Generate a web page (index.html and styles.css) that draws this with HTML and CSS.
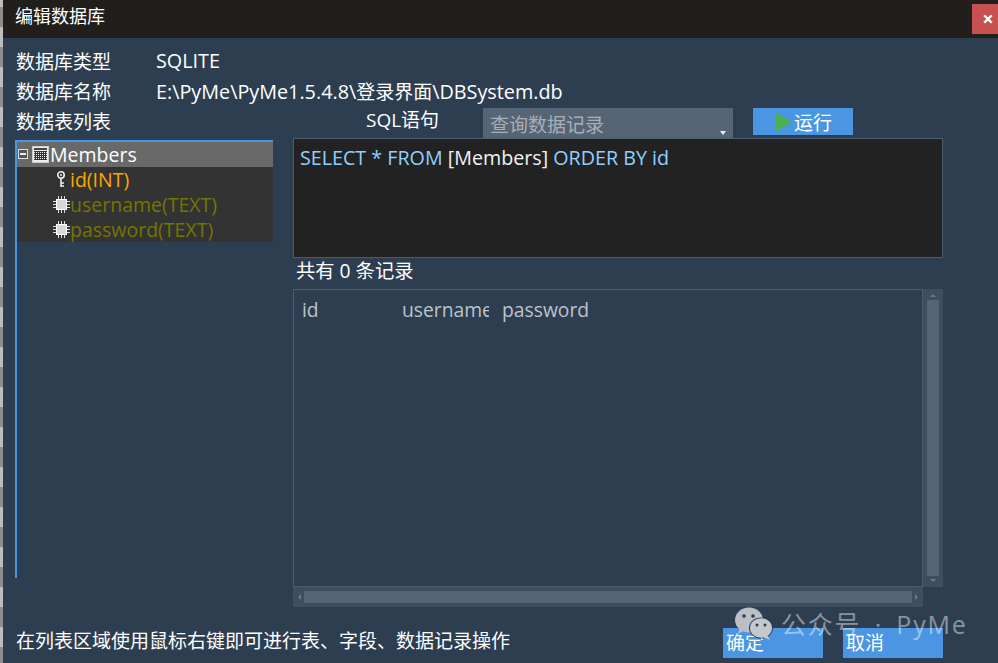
FILE: index.html
```html
<!DOCTYPE html>
<html lang="zh-CN">
<head>
    <meta charset="UTF-8">
    <title>编辑数据库</title>
    <link rel="stylesheet" href="styles.css">
</head>
<body>
    <div class="window">
        <div class="titlebar">
            <span class="title">编辑数据库</span>
            <div class="close">×</div>
        </div>
        <div class="content">
            <div class="info-row"><span class="info-label">数据库类型</span><span>SQLITE</span></div>
            <div class="info-row"><span class="info-label">数据库名称</span><span class="info-path">E:\PyMe\PyMe1.5.4.8\<span class="cjk">登录界面</span>\DBSystem.db</span></div>
            <div class="workspace">
                <div class="left-col">
                    <div class="list-label">数据表列表</div>
                    <div class="tree">
                        <div class="tree-head">
                            <svg class="expander" width="11" height="11" viewBox="0 0 11 11" shape-rendering="crispEdges">
                                <rect x="0.5" y="0.5" width="9" height="9" fill="#555" stroke="#ddd"/>
                                <rect x="2" y="4" width="6" height="2" fill="#eee"/>
                            </svg>
                            <svg class="table-icon" width="17" height="17" viewBox="0 0 17 17" shape-rendering="crispEdges">
                                <rect x="0.5" y="0.5" width="16" height="16" fill="#eee" stroke="#ccc"/>
                                <rect x="2" y="2" width="13" height="2" fill="#444"/>
                                <path d="M2 5.5h13M2 7.5h13M2 9.5h13M2 11.5h13M2 13.5h13M3.5 5v9M5.5 5v9M7.5 5v9M9.5 5v9M11.5 5v9M13.5 5v9" stroke="#333" fill="none"/>
                            </svg>
                            <span>Members</span>
                        </div>
                        <div class="tree-row key-row">
                            <svg class="key-icon" width="11" height="18" viewBox="0 0 11 18">
                                <circle cx="5" cy="4" r="3.2" fill="#333" stroke="#eee" stroke-width="1.6"/>
                                <circle cx="5" cy="4" r="1" fill="#eee"/>
                                <path d="M5 7v9M5 12h3M5 15h3" stroke="#eee" stroke-width="1.6" fill="none"/>
                            </svg>
                            <span>id(INT)</span>
                        </div>
                        <div class="tree-row field-row">
                            <svg class="chip-icon" width="17" height="17" viewBox="0 0 17 17" shape-rendering="crispEdges">
                                <path d="M5.500 0v17M8.500 0v17M11.500 0v17M0 5.500h17M0 8.500h17M0 11.500h17" stroke="#ddd" fill="none"/>
                                <rect x="3.500" y="3.500" width="10" height="10" fill="#d8d8d8" stroke="#fff"/>
                            </svg>
                            <span>username(TEXT)</span>
                        </div>
                        <div class="tree-row field-row">
                            <svg class="chip-icon" width="17" height="17" viewBox="0 0 17 17" shape-rendering="crispEdges">
                                <path d="M5.500 0v17M8.500 0v17M11.500 0v17M0 5.500h17M0 8.500h17M0 11.500h17" stroke="#ddd" fill="none"/>
                                <rect x="3.500" y="3.500" width="10" height="10" fill="#d8d8d8" stroke="#fff"/>
                            </svg>
                            <span>password(TEXT)</span>
                        </div>
                    </div>
                </div>
                <div class="right-col">
                    <div class="toolbar">
                        <span class="sql-label">SQL语句</span>
                        <div class="combo">查询数据记录<span class="combo-arrow"></span></div>
                        <div class="btn run-btn"><span class="run-icon"></span><span class="run-text">运行</span></div>
                    </div>
                    <div class="editor">
                        <span class="kw">SELECT * FROM</span> <span class="tbl">[Members]</span> <span class="kw">ORDER BY id</span>
                    </div>
                    <div class="count">共有 0 条记录</div>
                    <div class="grid-wrap">
                        <div class="grid-box">
                            <span class="col col-id">id</span>
                            <span class="col col-user">username</span>
                            <span class="col">password</span>
                        </div>
                        <div class="vbar">
                            <span class="arrow-up"></span>
                            <div class="vthumb"></div>
                            <span class="arrow-down"></span>
                        </div>
                    </div>
                    <div class="hbar">
                        <span class="arrow-left"></span>
                        <div class="hthumb"></div>
                        <span class="arrow-right"></span>
                    </div>
                </div>
            </div>
            <div class="footer">
                <span class="hint">在列表区域使用鼠标右键即可进行表、字段、数据记录操作</span>
                <div class="btn ok-btn">确定</div>
                <div class="btn">取消</div>
            </div>
        </div>
    </div>

    <!-- watermark sits over the buttons -->
    <div class="watermark">
        <svg width="38" height="34" viewBox="0 0 38 34">
            <ellipse cx="14" cy="13" rx="14" ry="12.500" fill="#b9bfc4"/>
            <path d="M5 20l-2 7 7-4z" fill="#b9bfc4"/>
            <ellipse cx="26" cy="21" rx="12" ry="10.500" fill="#2c3e50"/>
            <ellipse cx="26" cy="21" rx="11" ry="9.800" fill="#c3c8cc"/>
            <path d="M32 28l3 5-7-3z" fill="#c3c8cc"/>
            <circle cx="9" cy="9" r="1.800" fill="#2c3e50"/>
            <circle cx="18" cy="9" r="1.800" fill="#2c3e50"/>
            <circle cx="22" cy="18" r="1.500" fill="#2c3e50"/>
            <circle cx="30" cy="18" r="1.500" fill="#2c3e50"/>
        </svg>
        <span>公众号 · PyMe</span>
    </div>
</body>
</html>
```

FILE: styles.css
```css
html, body {
    margin: 0;
    padding: 0;
    height: 663px;
    overflow: hidden;
    background-color: #2c3e50;
}
body {
    font-family: "Open Sans", "Noto Sans CJK SC", sans-serif;
    font-size: 19px;
    color: #fff;
    position: relative;
}
.window {
    height: 663px;
    padding-left: 3px;
    box-sizing: border-box;
    /* striped edge left of the dialog */
    background: repeating-linear-gradient(to bottom, #bdbdbd 0, #bdbdbd 7px, #8e8e8e 7px, #8e8e8e 27px, #bdbdbd 27px, #bdbdbd 40px) left top / 3px 100% no-repeat;
}
.titlebar {
    height: 38px;
    background-color: #221e1c;
    display: flex;
    justify-content: space-between;
    padding-left: 12px;
    box-sizing: border-box;
}
.title {
    font-size: 18px;
    line-height: 32px;
}
.close {
    width: 26px;
    height: 30px;
    margin-top: 4px;
    padding-left: 6px;
    box-sizing: border-box;
    background-color: #c75050;
    font-size: 20px;
    font-weight: bold;
    line-height: 30px;
    text-align: center;
}
.content {
    padding: 8px 0 0 12px;
}
.info-row {
    height: 30px;
    line-height: 30px;
    display: flex;
    padding-left: 1px;
    font-size: 19.800px;
}
.info-label {
    width: 140px;
    font-size: 19px;
    line-height: 32px;
}
.info-path {
    line-height: 32px;
}
.cjk {
    font-size: 19px;
}

/* left tree + right side */
.workspace {
    display: grid;
    grid-template-columns: 258px 650px;
    column-gap: 20px;
    height: 522px;
}
.list-label {
    height: 34px;
    line-height: 32px;
    padding-left: 1px;
}
.tree {
    height: 438px;
    border-left: 2px solid #4a96e2;
    border-top: 2px solid #4a96e2;
    box-sizing: border-box;
}
.tree-head {
    height: 25px;
    background-color: #696969;
    display: flex;
    align-items: center;
    font-size: 19.500px;
    padding-left: 1px;
}
.expander {
    margin-right: 3px;
}
.table-icon {
    margin-right: 1px;
}
.tree-row {
    height: 25px;
    background-color: #333;
    display: flex;
    align-items: center;
    font-size: 19.500px;
}
.key-row {
    color: #ffa500;
    padding-left: 39px;
}
.key-icon {
    margin-right: 3px;
}
.field-row {
    color: #757500;
    padding-left: 36px;
}

.toolbar {
    height: 32px;
    display: flex;
    padding-left: 73px;
}
.sql-label {
    width: 117px;
    line-height: 29px;
    font-size: 19px;
}
.combo {
    width: 250px;
    height: 30px;
    margin-top: 2px;
    margin-right: 20px;
    padding-left: 7px;
    box-sizing: border-box;
    background-color: #566575;
    color: #a8afb6;
    line-height: 34px;
    position: relative;
}
.combo-arrow {
    position: absolute;
    right: 7px;
    bottom: 3px;
    border-left: 3px solid transparent;
    border-right: 3px solid transparent;
    border-top: 4px solid #eee;
}
.btn {
    width: 100px;
    height: 30px;
    background-color: #4a96e2;
    line-height: 30px;
    padding-left: 3px;
    box-sizing: border-box;
}
.run-btn {
    height: 27px;
    margin-top: 2px;
    padding-left: 22px;
    display: flex;
    align-items: center;
}
.run-icon {
    width: 0;
    height: 0;
    margin-right: 2px;
    border-left: 17px solid #4cb050;
    border-top: 10px solid transparent;
    border-bottom: 10px solid transparent;
}
.run-text {
    margin-top: 3px;
}
.editor {
    height: 120px;
    background-color: #222;
    border: 1px solid #4b5c6d;
    box-sizing: border-box;
    padding: 6px 6px;
    font-size: 19.700px;
    line-height: 25px;
}
.kw {
    color: #8fd0ff;
}
.tbl {
    color: #f2f2f2;
}
.count {
    height: 31px;
    line-height: 26px;
    padding-left: 3px;
    font-size: 19.300px;
}
.grid-wrap {
    display: flex;
    height: 298px;
}
.grid-box {
    width: 630px;
    border: 1px solid #4b5c6d;
    box-sizing: border-box;
    padding-left: 8px;
    color: #bcc3ca;
    font-size: 19.300px;
    line-height: 39px;
    display: flex;
}
.col {
    width: 100px;
    overflow: hidden;
    white-space: nowrap;
}
.col-user {
    width: 87px;
    margin-right: 13px;
}
.vbar {
    width: 20px;
    background-color: #3f4e5d;
    display: flex;
    flex-direction: column;
    align-items: center;
    justify-content: space-between;
    padding: 5px 0;
    box-sizing: border-box;
}
.vthumb {
    width: 12px;
    flex: 1;
    margin: 3px 0;
    background-color: #566575;
}
.hbar {
    width: 630px;
    height: 20px;
    background-color: #3f4e5d;
    display: flex;
    align-items: center;
    padding: 0 5px;
    box-sizing: border-box;
}
.hthumb {
    flex: 1;
    height: 12px;
    margin: 0 3px;
    background-color: #566575;
}
.arrow-up, .arrow-down {
    border-left: 3px solid transparent;
    border-right: 3px solid transparent;
}
.arrow-up {
    border-bottom: 3px solid #6b7885;
}
.arrow-down {
    border-top: 3px solid #6b7885;
}
.arrow-left, .arrow-right {
    border-top: 3px solid transparent;
    border-bottom: 3px solid transparent;
}
.arrow-left {
    border-right: 3px solid #6b7885;
}
.arrow-right {
    border-left: 3px solid #6b7885;
}
.footer {
    display: flex;
    height: 30px;
}
.hint {
    width: 708px;
    padding-left: 1px;
    box-sizing: border-box;
    line-height: 27px;
}
.ok-btn {
    margin-right: 20px;
}
.watermark {
    position: absolute;
    left: 735px;
    top: 607px;
    display: flex;
    align-items: flex-start;
    column-gap: 8px;
    color: rgba(255, 255, 255, 0.45);
    font-size: 25px;
    line-height: 34px;
}
.watermark span {
    letter-spacing: 1.800px;
    word-spacing: 5px;
}
```
